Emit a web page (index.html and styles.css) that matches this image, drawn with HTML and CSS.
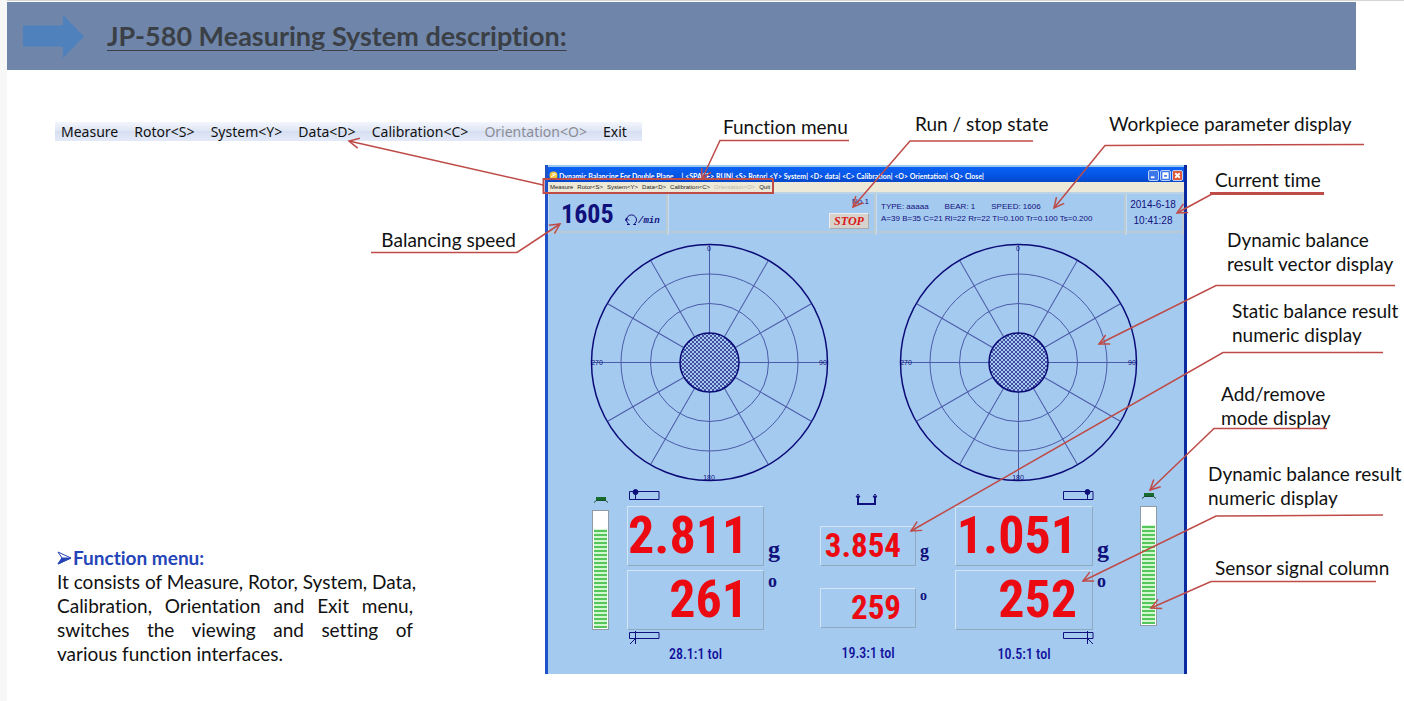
FILE: index.html
```html
<!DOCTYPE html>
<html lang="en">
<head>
<meta charset="utf-8">
<title>JP-580 Measuring System description</title>
<link rel="stylesheet" href="styles.css">
</head>
<body>
<main class="slide">
  <header class="banner">
    <svg class="banner-arrow" width="61" height="43" viewBox="0 0 61 43" aria-hidden="true"><path d="M0 10.500H40V0L61 21.500L40 43V31.500H0Z"/></svg>
    <h1>JP-580 Measuring System description:</h1>
  </header>

  <div class="top-row">
    <nav class="menu-strip">
      <button>Measure</button><button>Rotor&lt;S&gt;</button><button>System&lt;Y&gt;</button><button>Data&lt;D&gt;</button><button>Calibration&lt;C&gt;</button><button disabled>Orientation&lt;O&gt;</button><button>Exit</button>
    </nav>
    <p class="label label-function">Function menu</p>
    <p class="label label-run">Run / stop state</p>
    <p class="label label-work">Workpiece parameter display</p>
  </div>

  <div class="stage">
    <section class="left">
      <p class="label label-speed">Balancing speed</p>
      <article class="description">
        <h2><svg width="15" height="14" viewBox="0 0 15 14" aria-hidden="true"><path d="M1 1L14 7L1 13L5 7Z"/><path class="fill" d="M5 7H14L1 13Z"/></svg>Function menu:</h2>
        <p>
          <span class="line">It consists of Measure, Rotor, System, Data,</span>
          <span class="line">Calibration, Orientation and Exit menu,</span>
          <span class="line">switches the viewing and setting of</span>
          <span class="line-end">various function interfaces.</span>
        </p>
      </article>
    </section>

    <section class="app">
      <div class="titlebar">
        <svg width="9" height="9" viewBox="0 0 9 9" aria-hidden="true"><circle cx="4.500" cy="4.500" r="4" fill="#f3c53c"/><path d="M2 6L7 3M3 3H6" stroke="#fff" fill="none"/></svg>
        <span class="app-name">Dynamic Balancing For Double Plane</span>
        <span class="app-keys">| &lt;SPACE&gt; RUN| &lt;S&gt; Rotor| &lt;Y&gt; System| &lt;D&gt; data| &lt;C&gt; Calibration| &lt;O&gt; Orientation| &lt;Q&gt; Close|</span>
        <span class="controls">
          <button aria-label="Minimize"><svg viewBox="0 0 10 10"><path d="M2 7H6"/></svg></button>
          <button aria-label="Maximize"><svg viewBox="0 0 10 10"><path d="M2.500 2.500H7.500V7.500H2.500ZM2.500 3.500H7.500"/></svg></button>
          <button class="close" aria-label="Close"><svg viewBox="0 0 10 10"><path d="M2.500 2.500L7.500 7.500M7.500 2.500L2.500 7.500"/></svg></button>
        </span>
      </div>
      <nav class="app-menu">
        <button>Measure</button><button>Rotor&lt;S&gt;</button><button>System&lt;Y&gt;</button><button>Data&lt;D&gt;</button><button>Calibration&lt;C&gt;</button><button disabled>Orientation&lt;O&gt;</button><button>Quit</button>
      </nav>
      <div class="status">
        <div class="cell speed">
          <output>1605</output>
          <svg width="13" height="13" viewBox="0 0 13 13" aria-hidden="true"><path d="M4.500 11.500A5 5 0 1 1 8.500 11.500M0 8L1.500 5L4 7.500M4.500 11.500H2M8.500 11.500H11"/></svg>
          <i>/min</i>
        </div>
        <div class="cell state"><span>No.1</span><button class="stop">STOP</button></div>
        <div class="cell params">
          <p><span>TYPE: aaaaa</span><span>BEAR: 1</span><span>SPEED: 1606</span></p>
          <p>A=39 B=35 C=21 Rl=22 Rr=22 Tl=0.100 Tr=0.100 Ts=0.200</p>
        </div>
        <div class="cell clock"><time>2014-6-18</time><time>10:41:28</time></div>
      </div>

      <div class="charts">
        <svg class="polar polar-left" viewBox="0 0 237 237" role="img" aria-label="Left plane vector">
          <defs>
            <pattern id="hatch" width="4" height="4" patternUnits="userSpaceOnUse"><path d="M0 0L4 4M4 0L0 4" stroke="#15157c" stroke-width=".7"/></pattern>
            <g id="grid">
              <circle cx="118.500" cy="118.500" r="118" class="outer"/>
              <circle cx="118.500" cy="118.500" r="88.500"/>
              <circle cx="118.500" cy="118.500" r="59"/>
              <g id="spokes"><path id="spoke" d="M118.500 89V1"/>
                <use href="#spoke" transform="rotate(30 118.500 118.500)"/><use href="#spoke" transform="rotate(60 118.500 118.500)"/><use href="#spoke" transform="rotate(90 118.500 118.500)"/><use href="#spoke" transform="rotate(120 118.500 118.500)"/><use href="#spoke" transform="rotate(150 118.500 118.500)"/><use href="#spoke" transform="rotate(180 118.500 118.500)"/><use href="#spoke" transform="rotate(210 118.500 118.500)"/><use href="#spoke" transform="rotate(240 118.500 118.500)"/><use href="#spoke" transform="rotate(270 118.500 118.500)"/><use href="#spoke" transform="rotate(300 118.500 118.500)"/><use href="#spoke" transform="rotate(330 118.500 118.500)"/></g>
              <circle cx="118.500" cy="118.500" r="29.500" class="hub"/>
            </g>
          </defs>
          <use href="#grid"/>
          <text x="118" y="7">0</text><text x="232" y="121">90</text><text x="118" y="236">180</text><text x="6" y="121">270</text>
        </svg>
        <svg class="polar polar-right" viewBox="0 0 237 237" role="img" aria-label="Right plane vector">
          <use href="#grid"/>
          <text x="118" y="7">0</text><text x="232" y="121">90</text><text x="118" y="236">180</text><text x="6" y="121">270</text>
        </svg>
      </div>

      <div class="readings">
        <div class="sensor sensor-left">
          <svg width="15" height="6" viewBox="0 0 15 6" aria-hidden="true"><path d="M3 0H13V4H3Z" fill="#176b2c"/><path d="M1 5.500L3.500 3.500H12.500L15 5.500" fill="none" stroke="#174d2c"/></svg>
          <div class="gauge" role="meter" aria-label="Left sensor signal" aria-valuenow="85"><div class="level"></div></div>
        </div>
        <div class="plane plane-left">
          <svg class="mark" width="32" height="12" viewBox="0 0 32 12" aria-hidden="true"><path d="M.500 2.500H30V10.500H.500ZM6.500 2V10"/><circle cx="6.500" cy="3" r="2.500"/></svg>
          <div class="row"><output class="value">2.811</output><span class="unit">g</span></div>
          <div class="row"><output class="value">261</output><span class="unit deg">o</span></div>
          <svg class="mark" width="32" height="15" viewBox="0 0 32 15" aria-hidden="true"><path d="M.500 2.500H30V8.500H.500ZM6.500 1V14M1 14L6 9"/></svg>
          <p class="tol">28.1:1 tol</p>
        </div>
        <div class="plane plane-center">
          <svg class="mark" width="22" height="12" viewBox="0 0 22 12" aria-hidden="true"><path d="M3 3V11H20V3" stroke-width="2"/><path d="M1 4L3 1L5 4ZM18 4L20 1L22 4Z"/></svg>
          <div class="row"><output class="value">3.854</output><span class="unit">g</span></div>
          <div class="row"><output class="value">259</output><span class="unit deg">o</span></div>
          <p class="tol">19.3:1 tol</p>
        </div>
        <div class="plane plane-right">
          <svg class="mark" width="32" height="12" viewBox="0 0 32 12" aria-hidden="true"><path d="M1.500 2.500H31V10.500H1.500ZM25.500 2V10"/><circle cx="25.500" cy="3" r="2.500"/></svg>
          <div class="row"><output class="value">1.051</output><span class="unit">g</span></div>
          <div class="row"><output class="value">252</output><span class="unit deg">o</span></div>
          <svg class="mark" width="32" height="15" viewBox="0 0 32 15" aria-hidden="true"><path d="M1.500 2.500H31V8.500H1.500ZM25.500 1V14M26 9L31 14"/></svg>
          <p class="tol">10.5:1 tol</p>
        </div>
        <div class="sensor sensor-right">
          <svg width="15" height="6" viewBox="0 0 15 6" aria-hidden="true"><path d="M3 0H13V4H3Z" fill="#176b2c"/><path d="M1 5.500L3.500 3.500H12.500L15 5.500" fill="none" stroke="#174d2c"/></svg>
          <div class="gauge" role="meter" aria-label="Right sensor signal" aria-valuenow="85"><div class="level"></div></div>
        </div>
      </div>
    </section>

    <section class="right">
      <p class="label label-time">Current time</p>
      <p class="label label-vector">Dynamic balance<br>result vector display</p>
      <p class="label label-static">Static balance result<br>numeric display</p>
      <p class="label label-mode">Add/remove<br>mode display</p>
      <p class="label label-numeric">Dynamic balance result<br>numeric display</p>
      <p class="label label-sensor">Sensor signal column</p>
    </section>
  </div>

  <svg class="leaders" viewBox="0 0 1404 701" preserveAspectRatio="none" aria-hidden="true">
    <defs><marker id="tip" markerUnits="userSpaceOnUse" markerWidth="14" markerHeight="14" refX="11" refY="7" orient="auto"><path d="M1 2L11 7L1 12"/></marker></defs>
    <rect x="543.500" y="179" width="229.500" height="14" stroke-width="2"/>
    <g class="lead">
      <path d="M543 185L349 141"/>
      <path d="M849 140.500H720L702 179"/>
      <path d="M1033 141H910L853 207"/>
      <path d="M1364 144.500L1105 145.500L1054 208"/>
      <path d="M1212 194L1177 213"/>
      <path d="M1395 285.500H1216L1099 344"/>
      <path d="M1383 352.500H1223L911 531"/>
      <path d="M1327 428.500H1214L1150 490"/>
      <path d="M1383 515L1216 516L1083 581"/>
      <path d="M1376 581.500H1211L1151 608"/>
      <path d="M371 252.500H517L560 224"/>
    </g>
    <path d="M1210 193.500H1324" stroke-width="3"/>
  </svg>
</main>
</body>
</html>
```
FILE: styles.css
```css
* { box-sizing: border-box; }
body { margin: 0; background: #fff; color: #111; font-family: Lato, sans-serif; font-variant-ligatures: none; }
h1, h2, p { margin: 0; }
button { margin: 0; padding: 0; border: 0; background: none; font: inherit; color: inherit; }
svg { display: block; flex-shrink: 0; }

.slide { position: relative; min-height: 100vh; padding: 2px 0 0 7px; overflow: hidden; background: linear-gradient(to right, #f7f7f7 7px, transparent 7px); }
.slide::before { content: ""; position: absolute; top: 0; left: 7px; right: 0; height: 1px; background: #d4d4d4; }
.banner { display: flex; align-items: center; gap: 23px; height: 68px; margin-right: 48px; padding-left: 16px; background: #6f86aa; }
.banner-arrow { fill: #4f81bd; }
.banner h1 { font: bold 27px/32px Lato, sans-serif; font-variant-ligatures: none; color: #3b3f46; text-decoration: underline; text-decoration-thickness: 1px; text-underline-offset: 4px; white-space: nowrap; }

.label { font-size: 19px; line-height: 24px; white-space: nowrap; }
.top-row { display: grid; grid-template-columns: 587fr 81fr 192fr 194fr 295fr; height: 95px; padding: 42px 0 0 48px; }
.menu-strip { display: flex; justify-content: space-between; align-items: center; align-self: start; height: 19px; margin-top: 10px; padding: 0 15px 0 6px; background: linear-gradient(#f3f6fc, #dde4f3 50%, #d6dff2 50%, #e3e9f8); font: 14px/18px "Noto Sans", sans-serif; white-space: nowrap; }
.menu-strip button:disabled { color: #8b8d94; }
.label-function { grid-column: 3; margin-top: 3px; }

.stage { display: grid; grid-template-columns: 538fr 642fr 217fr; }
.left, .app, .right { min-width: 0; }
.left { padding-left: 50px; }
.label-speed { margin: 63px 29px 0 0; text-align: right; }
.description { width: 356px; margin-top: 293px; font-size: 19px; line-height: 24px; white-space: nowrap; }
.description h2 { display: flex; align-items: center; gap: 1px; font: bold 19px/25px Lato, sans-serif; font-variant-ligatures: none; color: #2444b8; }
.description h2 path { fill: none; stroke: #2444b8; }
.description h2 .fill { fill: #2444b8; }
.line { display: block; text-align-last: justify; }
.line-end { display: block; }

.app { height: 509px; border: solid #1f52c9; border-width: 0 3px; border-right-color: #0c2aa0; background: #a5caef; color: #10107c; font-family: "Liberation Sans", Arial, sans-serif; }
.titlebar { display: flex; align-items: center; height: 17px; padding: 2px 0 0 1px; border-top: 2px solid #9cc8ee; background: linear-gradient(#0a62f4, #0554e4 60%, #0648c8); color: #fff; font: bold 7px/12px Lato, sans-serif; white-space: nowrap; }
.app-name { margin-left: 1px; }
.app-keys { margin-left: 8px; }
.controls { display: flex; gap: 1px; margin-left: auto; padding-right: 1px; }
.controls button { width: 11px; height: 11px; border: 1px solid #b9d0fa; border-radius: 2px; background: #3c76e8; }
.controls .close { background: #df5735; }
.controls path { fill: none; stroke: #fff; stroke-width: 2; }
.app-menu { display: flex; align-items: center; gap: 4px; height: 10px; padding-left: 2px; background: #ece9d8; color: #222; font: 6px/10px "Liberation Sans", Arial, sans-serif; }
.app-menu button:disabled { color: #bbb8a8; }
.status { display: grid; grid-template-columns: 120fr 208fr 250fr 58fr; height: 41px; border-top: 2px solid #bcd3e6; border-bottom: 2px solid #b9c9d6; }
.cell { min-width: 0; border-right: 2px solid #bdcbd2; border-left: 1px solid #c3dcf3; }
.speed { display: flex; align-items: flex-start; padding-left: 12px; }
.speed output { width: 64px; font: bold 26px/41px "Roboto Condensed", "Liberation Sans", sans-serif; }
.speed svg { margin-top: 19px; fill: none; stroke: #10107c; }
.speed i { margin-top: 20px; font: italic bold 9px/14px "Liberation Mono", monospace; }
.state { display: flex; flex-direction: column; align-items: flex-end; padding: 2px 5px 0 0; font-size: 8px; line-height: 12px; }
.stop { width: 40px; height: 16px; margin-top: 5px; border: 1px solid; border-color: #eee #aaa #aaa #eee; background: #d8d2cc; color: #d81818; font: italic bold 12px/14px "Liberation Serif", serif; }
.params { padding: 7px 0 0 4px; font-size: 8px; line-height: 12px; white-space: nowrap; }
.params p { display: flex; gap: 16px; }
.clock { display: flex; flex-direction: column; align-items: center; padding: 3px 3px 0 0; font-size: 10px; line-height: 16px; white-space: nowrap; }

.charts { display: grid; grid-template-columns: 43fr 237fr 72fr 237fr 47fr; padding-top: 11px; }
.polar { width: 100%; height: 237px; overflow: visible; fill: none; stroke: #4a5ba8; stroke-width: 1; }
.polar .outer { stroke: #0b0b78; stroke-width: 1.500; }
.polar .hub { fill: url(#hatch); stroke: #0b0b78; stroke-width: 1.500; }
.polar text { fill: #10107c; stroke: none; font-size: 7px; text-anchor: middle; }
.polar-left { grid-column: 2; }
.polar-right { grid-column: 4; }

.readings { display: grid; grid-template-columns: 40fr 24fr 15fr 157fr 36fr 116fr 19fr 158fr 22fr 26fr 23fr; padding-top: 8px; }
.readings > * { min-width: 0; }
.sensor { display: flex; flex-direction: column; align-items: center; gap: 7px; }
.sensor-left { grid-column: 2; padding-top: 8px; }
.sensor-right { grid-column: 10; padding-top: 4px; }
.gauge { display: flex; align-items: flex-end; width: 17px; height: 120px; padding: 1px; border: 1px solid #8f9ca6; background: #fff; }
.level { width: 100%; height: 85%; background: repeating-linear-gradient(#d3f8d0 0 1px, #54c65c 1px 3px, #d3f8d0 3px 4px); }
.plane { display: flex; flex-direction: column; }
.plane-left { grid-column: 4; }
.plane-center { grid-column: 6; }
.plane-right { grid-column: 8; }
.mark { margin-left: 2px; fill: none; stroke: #10107c; }
.mark circle { fill: #10107c; }
.row { display: grid; grid-template-columns: minmax(0, 1fr) 20px; height: 60px; margin-bottom: 4px; }
.value { padding-right: 15px; border: 1px solid; border-color: #d4e6f6 #8fa9bf #8fa9bf #d4e6f6; color: #ec0a12; font: bold 52px/60px "Roboto Condensed", "Liberation Sans", sans-serif; line-height: 58px; text-align: right; white-space: nowrap; }
.unit { align-self: end; padding-left: 4px; font: bold 24px/34px "Liberation Serif", serif; }
.deg { align-self: start; font-size: 18px; line-height: 22px; }
.plane-left > .mark:first-child, .plane-right > .mark:first-child { margin-bottom: 5px; }
.plane-left > .row + .row, .plane-right > .row + .row { margin-bottom: 0; }
.plane-right .mark { margin-left: 107px; }
.plane-center .mark { margin: 4px 0 21px 35px; }
.plane-center .row { height: 40px; margin-bottom: 22px; }
.plane-center .row + .row { margin-bottom: 16px; }
.plane-center .value { padding-right: 14px; font-size: 33px; line-height: 38px; }
.plane-center .unit { font-size: 18px; line-height: 30px; }
.plane-center .deg { font-size: 14px; line-height: 16px; }
.tol { padding-right: 20px; color: #10109c; font: 500 14px/18px "Roboto Condensed", "Liberation Sans", sans-serif; text-align: center; }

.right .label-time { margin: 3px 0 36px 28px; }
.right .label-vector { margin: 0 0 23px 40px; }
.right .label-static { margin: 0 0 35px 45px; }
.right .label-mode { margin: 0 0 32px 34px; }
.right .label-numeric { margin: 0 0 46px 21px; }
.right .label-sensor { margin-left: 28px; }

.leaders { position: absolute; top: 0; left: 0; width: 100%; height: 701px; pointer-events: none; fill: none; stroke: #be4b48; stroke-width: 1.500; }
.lead path { marker-end: url(#tip); }
```
